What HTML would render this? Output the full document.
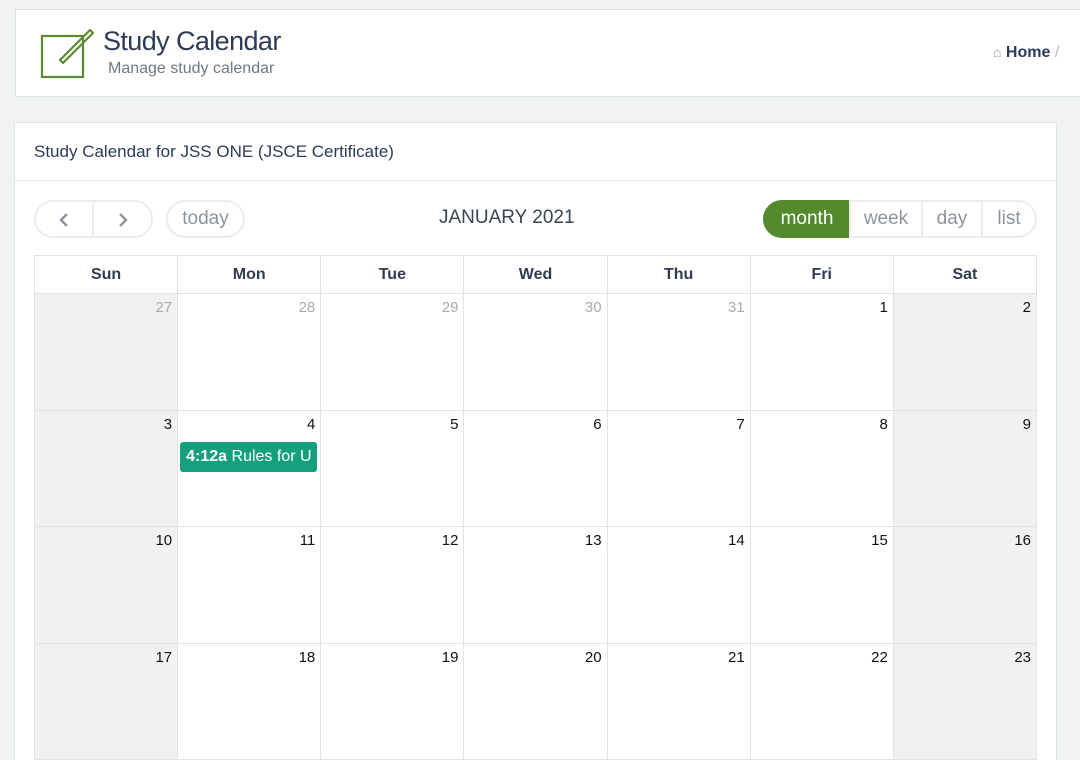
<!DOCTYPE html>
<html><head><style>
*{margin:0;padding:0;box-sizing:border-box}
html,body{width:1080px;height:760px;overflow:hidden}
body{background:#f1f2f2;font-family:"Liberation Sans",sans-serif;position:relative}
.abs{position:absolute}
.hdr{left:15px;top:9px;width:1080px;height:88px;background:#fff;border:1px solid #dde3ea}
.card{left:14px;top:122px;width:1043px;height:640px;background:#fff;border:1px solid #dde3ea}
.btn{position:absolute;top:200px;height:38px;border:2px solid #ececec;color:#8a949e;font-size:19px;line-height:34px;text-align:center;background:#fff}
table{position:absolute;left:34px;top:255px;border-collapse:collapse;table-layout:fixed;width:1003px}
td,th{border:1px solid #e2e2e2;width:143px}
th{height:38px;font-size:16px;color:#2f3c52;font-weight:bold}
td{height:116.5px;vertical-align:top;text-align:right;padding:5px 5px 0 0;font-size:15px;color:#111}
td.g{background:#f1f1f1}
td.o{color:#aaa}
</style></head><body>
<div class="abs hdr"></div>
<svg class="abs" style="left:38px;top:25px" width="60" height="56" viewBox="0 0 60 56">
<rect x="4" y="11" width="41" height="41" fill="none" stroke="#5a8a32" stroke-width="2.2"/>
<path d="M22 35 L52 5 L55 8 L25 38 Z" fill="none" stroke="#5a8a32" stroke-width="2.2" stroke-linejoin="round"/>
</svg>
<div class="abs" style="left:103px;top:26px;font-size:27px;color:#2d3b57;letter-spacing:-0.6px">Study Calendar</div>
<div class="abs" style="left:108px;top:60px;font-size:16px;color:#707880">Manage study calendar</div>
<div class="abs" style="left:993px;top:44px;font-size:16px;color:#2d3b57;font-weight:bold"><span style="color:#999;font-weight:normal;font-size:14px">⌂</span> Home <span style="color:#bbb;font-weight:normal">/</span></div>
<div class="abs card"></div>
<div class="abs" style="left:34px;top:142px;font-size:17px;color:#2d3b57">Study Calendar for JSS ONE (JSCE Certificate)</div>
<div class="abs" style="left:15px;top:180px;width:1041px;height:1px;background:#e3e7ec"></div>
<div class="btn" style="left:34px;width:60px;border-radius:19px 0 0 19px"><svg width="14" height="16" viewBox="0 0 14 16" style="margin-top:10px"><path d="M10 2 L4 8 L10 14" fill="none" stroke="#8a949e" stroke-width="2.4"/></svg></div>
<div class="btn" style="left:92px;width:61px;border-radius:0 19px 19px 0"><svg width="14" height="16" viewBox="0 0 14 16" style="margin-top:10px"><path d="M4 2 L10 8 L4 14" fill="none" stroke="#8a949e" stroke-width="2.4"/></svg></div>
<div class="btn" style="left:166px;width:79px;border-radius:19px">today</div>
<div class="abs" style="left:439px;top:207px;font-size:19px;color:#3a4554">JANUARY 2021</div>
<div class="btn" style="left:763px;width:88px;border-radius:19px 0 0 19px;background:#548a2e;border-color:#548a2e;color:#fff">month</div>
<div class="btn" style="left:849px;width:74px;border-radius:0">week</div>
<div class="btn" style="left:921px;width:62px;border-radius:0">day</div>
<div class="btn" style="left:981px;width:56px;border-radius:0 19px 19px 0">list</div>
<table>
<tr><th>Sun</th><th>Mon</th><th>Tue</th><th>Wed</th><th>Thu</th><th>Fri</th><th>Sat</th></tr>
<tr><td class="g o">27</td><td class="o">28</td><td class="o">29</td><td class="o">30</td><td class="o">31</td><td>1</td><td class="g">2</td></tr>
<tr><td class="g">3</td><td style="position:relative">4<div style="position:absolute;left:2px;top:31px;width:137px;height:30px;background:#14a07c;border-radius:3px;color:#fff;font-size:16px;line-height:30px;text-align:left;padding-left:6px;white-space:nowrap;overflow:hidden"><b>4:12a</b> Rules for U</div></td><td>5</td><td>6</td><td>7</td><td>8</td><td class="g">9</td></tr>
<tr><td class="g">10</td><td>11</td><td>12</td><td>13</td><td>14</td><td>15</td><td class="g">16</td></tr>
<tr><td class="g">17</td><td>18</td><td>19</td><td>20</td><td>21</td><td>22</td><td class="g">23</td></tr>
</table>
</body></html>
